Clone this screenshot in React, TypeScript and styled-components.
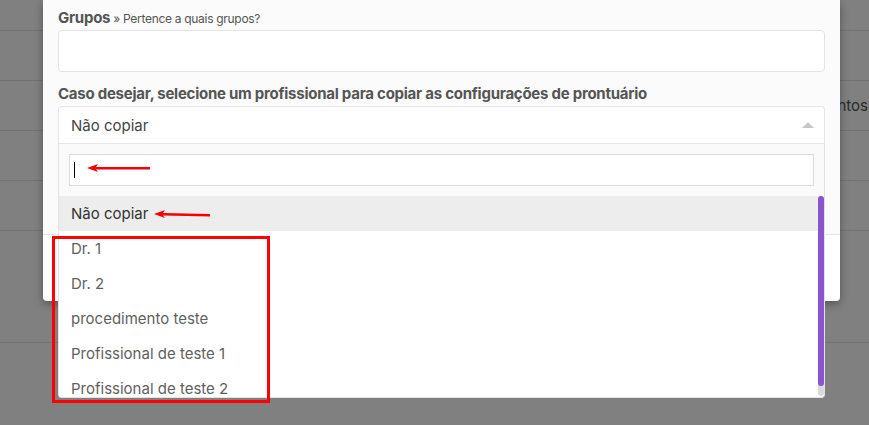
import React from "react";
import styled, { createGlobalStyle } from "styled-components";

const GlobalStyle = createGlobalStyle`
    html, body {
        margin: 0;
        padding: 0;
        background: #808080;
        font-family: "Inter", "Liberation Sans", sans-serif;
        overflow: hidden;
    }
`;

const Page = styled.div`
    position: relative;
    width: 869px;
    height: 425px;
    overflow: hidden;
    background: #808080;
`;

const BgRow = styled.div<{ h: number }>`
    height: ${(p) => p.h}px;
    box-sizing: border-box;
    border-bottom: 1px solid #737373;
    display: flex;
    align-items: center;
    justify-content: flex-end;
    padding-right: 1px;
    color: #2b2b2b;
    font-size: 15px;
`;

const Modal = styled.div`
    position: absolute;
    left: 43px;
    top: 0;
    width: 797px;
    height: 301px;
    background: #fff;
    border-radius: 0 0 4px 4px;
    box-shadow: 0 3px 8px rgba(0, 0, 0, 0.35);
    display: flex;
    flex-direction: column;
`;

const ModalBody = styled.div`
    height: 235px;
    background: #fbfbfb;
    border-bottom: 1px solid #e4e4e4;
    padding: 8px 15px 0;
    box-sizing: border-box;
`;

const Label = styled.div`
    height: 20px;
    line-height: 20px;
    color: #555;
    font-size: 15px;
    font-weight: 700;
    letter-spacing: -0.25px;
    display: flex;
    align-items: baseline;
    gap: 3px;
`;

const Hint = styled.span`
    font-size: 12px;
    font-weight: 400;
    letter-spacing: -0.3px;
`;

const Input = styled.div`
    height: 42px;
    margin-top: 2px;
    margin-bottom: 12px;
    box-sizing: border-box;
    background: #fff;
    border: 1px solid #e3e3e3;
    border-radius: 4px;
`;

const SelectWrap = styled.div`
    position: relative;
    margin-top: 2px;
`;

const SelectBox = styled.div`
    height: 37px;
    box-sizing: border-box;
    background: #fff;
    border: 1px solid #e6e6e6;
    border-bottom: none;
    border-radius: 4px 4px 0 0;
    padding: 0 12px;
    display: flex;
    align-items: center;
    justify-content: space-between;
    color: #444;
    font-size: 15px;
`;

const Caret = styled.span`
    width: 0;
    height: 0;
    border-left: 6px solid transparent;
    border-right: 6px solid transparent;
    border-bottom: 6px solid #c8c8c8;
    margin-right: -2px;
`;

const Dropdown = styled.div`
    position: absolute;
    top: 100%;
    left: 0;
    right: 0;
    z-index: 5;
    background: #fff;
    border: 1px solid #e2e2e2;
    border-top: 1px solid #e6e6e6;
    border-radius: 0 0 4px 4px;
    box-sizing: border-box;
`;

const SearchArea = styled.div`
    background: #fafafa;
    padding: 10px;
`;

const SearchInput = styled.div`
    height: 32px;
    box-sizing: border-box;
    background: #fff;
    border: 1px solid #dcdcdc;
    padding-left: 4px;
    display: flex;
    align-items: center;
`;

const TextCursor = styled.span`
    width: 1px;
    height: 16px;
    background: #000;
`;

const List = styled.div`
    height: 201px;
    display: flex;
    overflow: hidden;
`;

const Items = styled.div`
    flex: 1;
    overflow: hidden;
`;

const ScrollTrack = styled.div`
    width: 6px;
    height: 200px;
    background: #d9d9d9;
    border-radius: 3px;
`;

const ScrollThumb = styled.div`
    height: 190px;
    background: #8a55cc;
    border-radius: 3px;
`;

const Option = styled.div<{ active?: boolean }>`
    height: 35px;
    padding: 0 12px;
    display: flex;
    align-items: center;
    font-size: 15px;
    color: ${(p) => (p.active ? "#333" : "#5f5f5f")};
    background: ${(p) => (p.active ? "#ededed" : "#fff")};
`;

const MarkBox = styled.div`
    position: absolute;
    left: 52px;
    top: 236px;
    width: 218px;
    height: 167px;
    box-sizing: border-box;
    border: 3px solid #ff0000;
    pointer-events: none;
    z-index: 10;
`;

const Arrow = styled.svg<{ x: number; y: number }>`
    position: absolute;
    left: ${(p) => p.x}px;
    top: ${(p) => p.y}px;
    z-index: 10;
`;

const RedArrow: React.FC<{ x: number; y: number; w: number; tilt?: number }> = ({ x, y, w, tilt = 0 }) => (
    <Arrow x={x} y={y} width={w} height={12} viewBox={`0 0 ${w} 12`}>
        <polygon points={`0,6 11,2 9,5 ${w},${5 + tilt} ${w},${7.5 + tilt} 9,7.5 11,10`} fill="#f40000" />
    </Arrow>
);

const options = ["Dr. 1", "Dr. 2", "procedimento teste", "Profissional de teste 1", "Profissional de teste 2"];

export default function App() {
    return (
        <Page>
            <GlobalStyle />
            <BgRow h={31} />
            <BgRow h={50} />
            <BgRow h={50}>Procedimentos</BgRow>
            <BgRow h={50} />
            <BgRow h={50} />
            <BgRow h={112} />

            <Modal>
                <ModalBody>
                    <Label>
                        Grupos <Hint>» Pertence a quais grupos?</Hint>
                    </Label>
                    <Input />
                    <Label>Caso desejar, selecione um profissional para copiar as configurações de prontuário</Label>
                    <SelectWrap>
                        <SelectBox>
                            Não copiar
                            <Caret />
                        </SelectBox>
                        <Dropdown>
                            <SearchArea>
                                <SearchInput>
                                    <TextCursor />
                                </SearchInput>
                            </SearchArea>
                            <List>
                                <Items>
                                    <Option active>Não copiar</Option>
                                    {options.map((o) => (
                                        <Option key={o}>{o}</Option>
                                    ))}
                                </Items>
                                <ScrollTrack>
                                    <ScrollThumb />
                                </ScrollTrack>
                            </List>
                        </Dropdown>
                    </SelectWrap>
                </ModalBody>
            </Modal>

            <RedArrow x={87} y={162} w={63} />
            <RedArrow x={154} y={208} w={56} tilt={1} />
            <MarkBox />
        </Page>
    );
}
